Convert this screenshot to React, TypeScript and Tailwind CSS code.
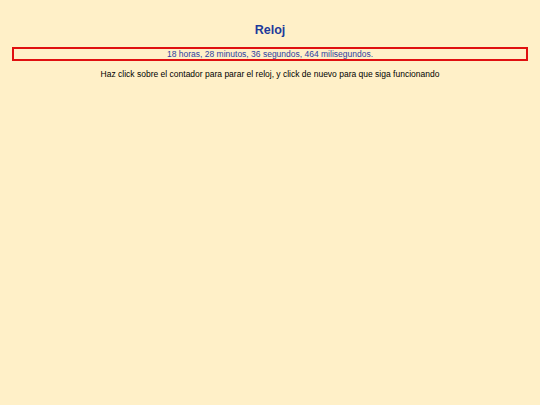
export default function App() {
  return (
    <div className="min-h-[405px] w-full bg-[#fff0c8] pt-[20px] text-center font-['Liberation_Sans',Arial,sans-serif]">
      <h1 className="text-[12.5px] font-bold leading-[20px] text-[#1d3a9b]">Reloj</h1>
      <div className="mx-[12px] mt-[7px] cursor-pointer border-2 border-[#e01010] text-[8.5px] leading-[10px] text-[#2f3f9f]">
        18 horas, 28 minutos, 36 segundos, 464 milisegundos.
      </div>
      <p className="mt-[7px] text-[8.5px] leading-[12px] text-black">
        Haz click sobre el contador para parar el reloj, y click de nuevo para que siga funcionando
      </p>
    </div>
  );
}
